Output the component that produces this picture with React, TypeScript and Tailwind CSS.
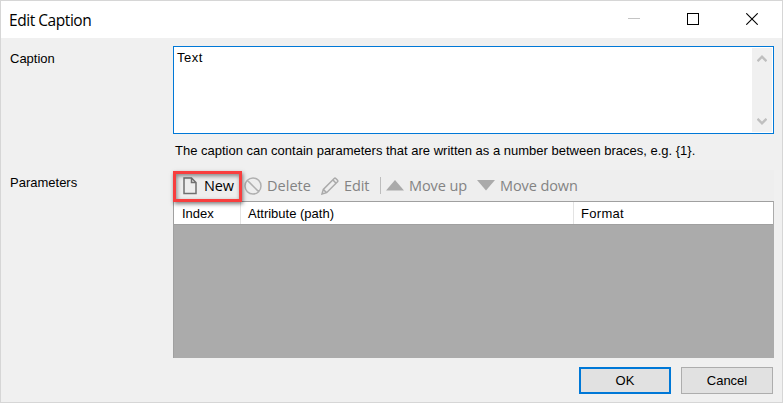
import React from "react";

const sans = "font-['Liberation_Sans',Arial,sans-serif] text-[13px] leading-4 whitespace-nowrap text-black";
const tool = "font-['Open_Sans','Noto_Sans',sans-serif] text-[14.5px] leading-5 tracking-[-0.1px] whitespace-nowrap";

function TitleBar() {
  return (
    <header className="flex h-[37px] shrink-0 items-center bg-white pl-2 text-black">
      <h1 className="flex-1 font-['Open_Sans','Noto_Sans',sans-serif] text-[15.5px] leading-5 font-normal tracking-[-0.45px]">
        Edit Caption
      </h1>
      <div className="flex items-center gap-[47px] pr-6 pb-px">
        <svg width="12" height="12" shapeRendering="crispEdges" className="shrink-0">
          <path d="M0 5.5H12" stroke="#c4c4c4" />
        </svg>
        <svg width="12" height="12" shapeRendering="crispEdges" className="shrink-0">
          <rect x=".5" y=".5" width="11" height="11" fill="none" stroke="#000" />
        </svg>
        <svg width="12" height="12" className="shrink-0">
          <path d="M.3.3 11.7 11.7M11.7.3.3 11.7" stroke="#000" strokeWidth="1.1" />
        </svg>
      </div>
    </header>
  );
}

function CaptionBox() {
  return (
    <div className="flex h-[88px] w-[601px] border border-[#0078d7] bg-white p-px">
      <div className={`${sans} flex-1 pt-[2px] pl-[2px] tracking-[0.5px]`}>Text</div>
      <div className="flex w-5 flex-col items-center justify-between bg-[#f0f0f0] py-[7px]">
        <svg width="10" height="7">
          <path d="M.5 6.2 5 1.7 9.5 6.2" fill="none" stroke="#bfbfbf" strokeWidth="2.4" />
        </svg>
        <svg width="10" height="7">
          <path d="M.5.8 5 5.3 9.5.8" fill="none" stroke="#bfbfbf" strokeWidth="2.4" />
        </svg>
      </div>
    </div>
  );
}

function Toolbar() {
  return (
    <div className="relative flex h-[31px] w-[601px] items-center bg-[#eeeeee] text-[#838383]">
      <svg width="14" height="18" className="ml-[10px] shrink-0">
        <path d="M1 1H8.5L13 5.5V16.5H1ZM8.5 1V5.5H13" fill="none" stroke="#707070" strokeWidth="1.5" />
      </svg>
      <span className={`${tool} ml-[7px] w-[35px] text-black`}>New</span>
      <svg width="18" height="18" className="ml-[5px] shrink-0">
        <path d="M17 9A8 8 0 1 1 1 9A8 8 0 1 1 17 9M3.4 3.4 14.6 14.6" fill="none" stroke="#b0b0b0" strokeWidth="1.5" />
      </svg>
      <span className={`${tool} ml-[5px] w-[49px] tracking-[0.02px]`}>Delete</span>
      <svg width="18" height="18" className="ml-[5px] shrink-0">
        <path d="M1 17 2.3 12.4 13.2 1.5Q14 .8 14.8 1.5L16.5 3.2Q17.2 4 16.5 4.8L5.6 15.7ZM2.3 12.4 5.6 15.7M11.8 2.9 15.1 6.2" fill="none" stroke="#aaa" strokeWidth="1.5" />
      </svg>
      <span className={`${tool} ml-[5px] w-9`}>Edit</span>
      <span className="h-[17px] w-px bg-[#bdbdbd]" />
      <svg width="18" height="11" className="ml-[5px] shrink-0">
        <path d="M0 10.5 9 0l9 10.5Z" fill="#aaa" />
      </svg>
      <span className={`${tool} ml-[5px] w-[63px]`}>Move up</span>
      <svg width="18" height="11" className="ml-[5px] shrink-0">
        <path d="M0 0H18L9 10.5Z" fill="#aaa" />
      </svg>
      <span className={`${tool} ml-[5px]`}>Move down</span>
      <div className="absolute top-px left-0 h-[31px] w-[69px] border-[3px] border-[#f83e3e] shadow-[1px_2px_4px_rgba(0,0,0,.5),inset_1px_2px_4px_rgba(0,0,0,.45)]" />
    </div>
  );
}

function ParameterGrid() {
  return (
    <div className="h-[157px] w-[601px] border-t border-r border-l border-t-[#a0a0a0] border-r-[#ababab] border-l-[#a0a0a0] bg-[#ababab]">
      <div className={`${sans} flex h-[23px] items-center border-b border-[#a0a0a0] bg-white`}>
        <div className="flex h-full w-[67px] items-center border-r border-[#e3e3e3] pt-px pl-2">Index</div>
        <div className="flex h-full w-[333px] items-center border-r border-[#e3e3e3] pt-px pl-[7px]">Attribute (path)</div>
        <div className="pt-px pl-[7px] tracking-[0.3px]">Format</div>
      </div>
    </div>
  );
}

export default function App() {
  return (
    <div className="flex h-[403px] w-[783px] flex-col overflow-hidden border border-[#d6d6d6] bg-[#f0f0f0]">
      <TitleBar />
      <main className="flex flex-col pt-2">
        <section className="flex">
          <div className={`${sans} w-[172px] pt-[5px] pl-[9px]`}>Caption</div>
          <div>
            <CaptionBox />
            <p className={`${sans} mt-[9px] ml-[2px]`}>
              The caption can contain parameters that are written as a number between braces, e.g. {"{1}"}.
            </p>
          </div>
        </section>
        <section className="mt-[11px] flex">
          <div className={`${sans} w-[172px] pt-[5px] pl-[9px]`}>Parameters</div>
          <div>
            <Toolbar />
            <ParameterGrid />
          </div>
        </section>
        <footer className="mt-[9px] flex justify-end gap-[10px] pr-[9px]">
          <button className={`${sans} h-[27px] w-[92px] border-2 border-[#0078d7] bg-[#e1e1e1]`}>OK</button>
          <button className={`${sans} h-[27px] w-[92px] border border-[#adadad] bg-[#e1e1e1]`}>Cancel</button>
        </footer>
      </main>
    </div>
  );
}
